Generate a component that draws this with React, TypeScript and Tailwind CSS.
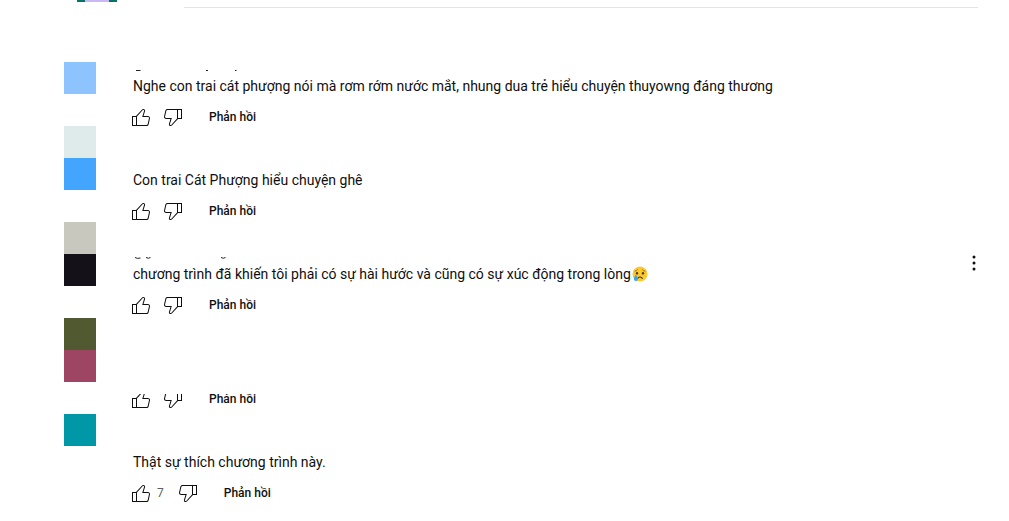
type Comment = {
  id: number;
  text?: string;
  emoji?: boolean;
  likes?: number;
  authorMarks?: string;
  menu?: boolean;
  clipped?: boolean;
};

const swatches = [
  'bg-[#8dc3ff]',
  'bg-white',
  'bg-[#dfebea]',
  'bg-[#44a5ff]',
  'bg-white',
  'bg-[#c9c8bf]',
  'bg-[#141218]',
  'bg-white',
  'bg-[#505930]',
  'bg-[#9e4563]',
  'bg-white',
  'bg-[#0097a7]',
];

const comments: Comment[] = [
  {
    id: 1,
    text: 'Nghe con trai cát phượng nói mà rơm rớm nước mắt, nhung dua trẻ hiểu chuyện thuyowng đáng thương',
    authorMarks: 'M3 8.500h4.500M73 8.500h2M102 8.500h1.500',
  },
  { id: 2, text: 'Con trai Cát Phượng hiểu chuyện ghê' },
  {
    id: 3,
    text: 'chương trình đã khiến tôi phải có sự hài hước và cũng có sự xúc động trong lòng',
    emoji: true,
    authorMarks: 'M2 7.500q2 1.500 5.500 .5M13 7.500q2.500 1.500 4.500 0M88 7.500q2.500 1.500 4.500 0',
    menu: true,
  },
  { id: 4, clipped: true },
  { id: 5, text: 'Thật sự thích chương trình này.', likes: 7 },
];

function LikeIcon() {
  return (
    <svg viewBox="0 0 24 24" className="block w-6 h-6" fill="currentColor" aria-hidden="true">
      <path d="M18.77,11h-4.23l1.52-4.94C16.38,5.03,15.54,4,14.38,4c-0.58,0-1.14,0.24-1.52,0.65L7,11H3v10h4h1h9.43c1.06,0,1.98-0.67,2.19-1.61l1.34-6C21.23,12.15,20.18,11,18.77,11z M7,20H4v-8h3V20z M19.98,13.17l-1.34,6C18.54,19.65,18.03,20,17.43,20H8v-8.61l5.6-6.06C13.79,5.12,14.08,5,14.38,5c0.26,0,0.5,0.11,0.63,0.3c0.07,0.1,0.15,0.26,0.09,0.47l-1.52,4.94L13.18,12h1.35h4.23c0.41,0,0.8,0.17,1.03,0.46C19.92,12.61,20.05,12.86,19.98,13.17z" />
    </svg>
  );
}

function DislikeIcon() {
  return (
    <svg viewBox="0 0 24 24" className="block w-6 h-6" fill="currentColor" aria-hidden="true">
      <path d="M17,4h-1H6.57C5.5,4,4.59,4.67,4.38,5.61l-1.34,6C2.77,12.85,3.82,14,5.23,14h4.23l-1.52,4.94C7.62,19.97,8.46,21,9.62,21c0.58,0,1.14-0.24,1.52-0.65L17,14h4V4H17z M10.4,19.67C10.21,19.88,9.92,20,9.62,20c-0.26,0-0.5-0.11-0.63-0.3c-0.07-0.1-0.15-0.26-0.09-0.47l1.52-4.94l0.4-1.29H9.46H5.23c-0.41,0-0.8-0.17-1.03-0.46c-0.12-0.15-0.25-0.4-0.18-0.72l1.34-6C5.46,5.35,5.97,5,6.57,5H16v8.61L10.4,19.67z M20,13h-3V5h3V13z" />
    </svg>
  );
}

function CryingFace() {
  return (
    <svg viewBox="0 0 16 16" className="inline-block w-4 h-4 ml-px align-text-bottom" role="img" aria-label="Crying face">
      <circle cx="8" cy="8" r="7.5" fill="#fcc92f" />
      <path d="M3 5.2q1.8-.3 2.6-1.5M13 5.2q-1.8-.3-2.6-1.5" fill="none" stroke="#8a5a12" strokeWidth=".8" strokeLinecap="round" />
      <ellipse cx="5" cy="7.3" rx="1.1" ry="1.4" fill="#4b3420" />
      <ellipse cx="11" cy="7.3" rx="1.1" ry="1.4" fill="#4b3420" />
      <path d="M5.7 12.3q2.3-2.6 4.6 0" fill="none" stroke="#4b3420" strokeWidth="1.1" strokeLinecap="round" />
      <path d="M3.8 8.8q2.1 2.6 2 4.1a2 2 0 0 1-4 0q0-1.5 2-4.1z" fill="#36a5f0" />
    </svg>
  );
}

function CommentRow({ comment }: { comment: Comment }) {
  return (
    <li className="flex items-start justify-between h-[94px]">
      <div className="min-w-0">
        {/* Author line, mostly hidden */}
        <div className="h-3.5 pl-1">
          {comment.authorMarks && (
            <svg viewBox="0 0 120 14" className="block w-[120px] h-3.5" aria-hidden="true">
              <path d={comment.authorMarks} fill="none" stroke="#222" strokeWidth="1" />
            </svg>
          )}
        </div>
        <p className="h-5 pl-1 text-sm leading-5 whitespace-nowrap">
          {comment.text}
          {comment.emoji && <CryingFace />}
        </p>

        {/* Actions */}
        <div
          className={
            comment.clipped
              ? 'flex items-end mt-4 h-[17px] overflow-hidden'
              : 'flex items-end mt-[9px] h-6'
          }
        >
          <button type="button" aria-label="Thích">
            <LikeIcon />
          </button>
          {comment.likes && (
            <span className="mx-1 text-xs leading-6 text-[#606060]">{comment.likes}</span>
          )}
          <button type="button" aria-label="Không thích" className="ml-2">
            <DislikeIcon />
          </button>
          <button type="button" className="ml-6 text-xs leading-6 font-medium">
            Phản hồi
          </button>
        </div>
      </div>

      {comment.menu && (
        <button type="button" aria-label="Menu" className="mt-px">
          <svg viewBox="0 0 24 24" className="block w-6 h-6" fill="currentColor" aria-hidden="true">
            <circle cx="12" cy="6" r="1.5" />
            <circle cx="12" cy="12" r="1.5" />
            <circle cx="12" cy="18" r="1.5" />
          </svg>
        </button>
      )}
    </li>
  );
}

export default function App() {
  return (
    <div className="bg-white text-[#0f0f0f] font-[Roboto,sans-serif] overflow-hidden">
      {/* Comment box */}
      <header className="flex items-start h-[62px] pl-[77px] pr-[31px]">
        <div className="flex w-10 h-0.5 bg-[#0b7266]">
          <div className="w-6 h-0.5 mx-auto bg-[#c9b8f5]" />
        </div>
        <div className="flex-1 h-px mt-[7px] ml-[67px] bg-[#e5e5e5]" />
      </header>

      <main className="flex items-start pl-16 pr-[23px]">
        <div className="w-8 shrink-0">
          {swatches.map((color, idx) => (
            <div key={idx} className={`h-8 ${color}`} />
          ))}
        </div>

        <ul className="flex-1 min-w-0 ml-[33px]">
          {comments.map((comment) => (
            <CommentRow key={comment.id} comment={comment} />
          ))}
        </ul>
      </main>
    </div>
  );
}
